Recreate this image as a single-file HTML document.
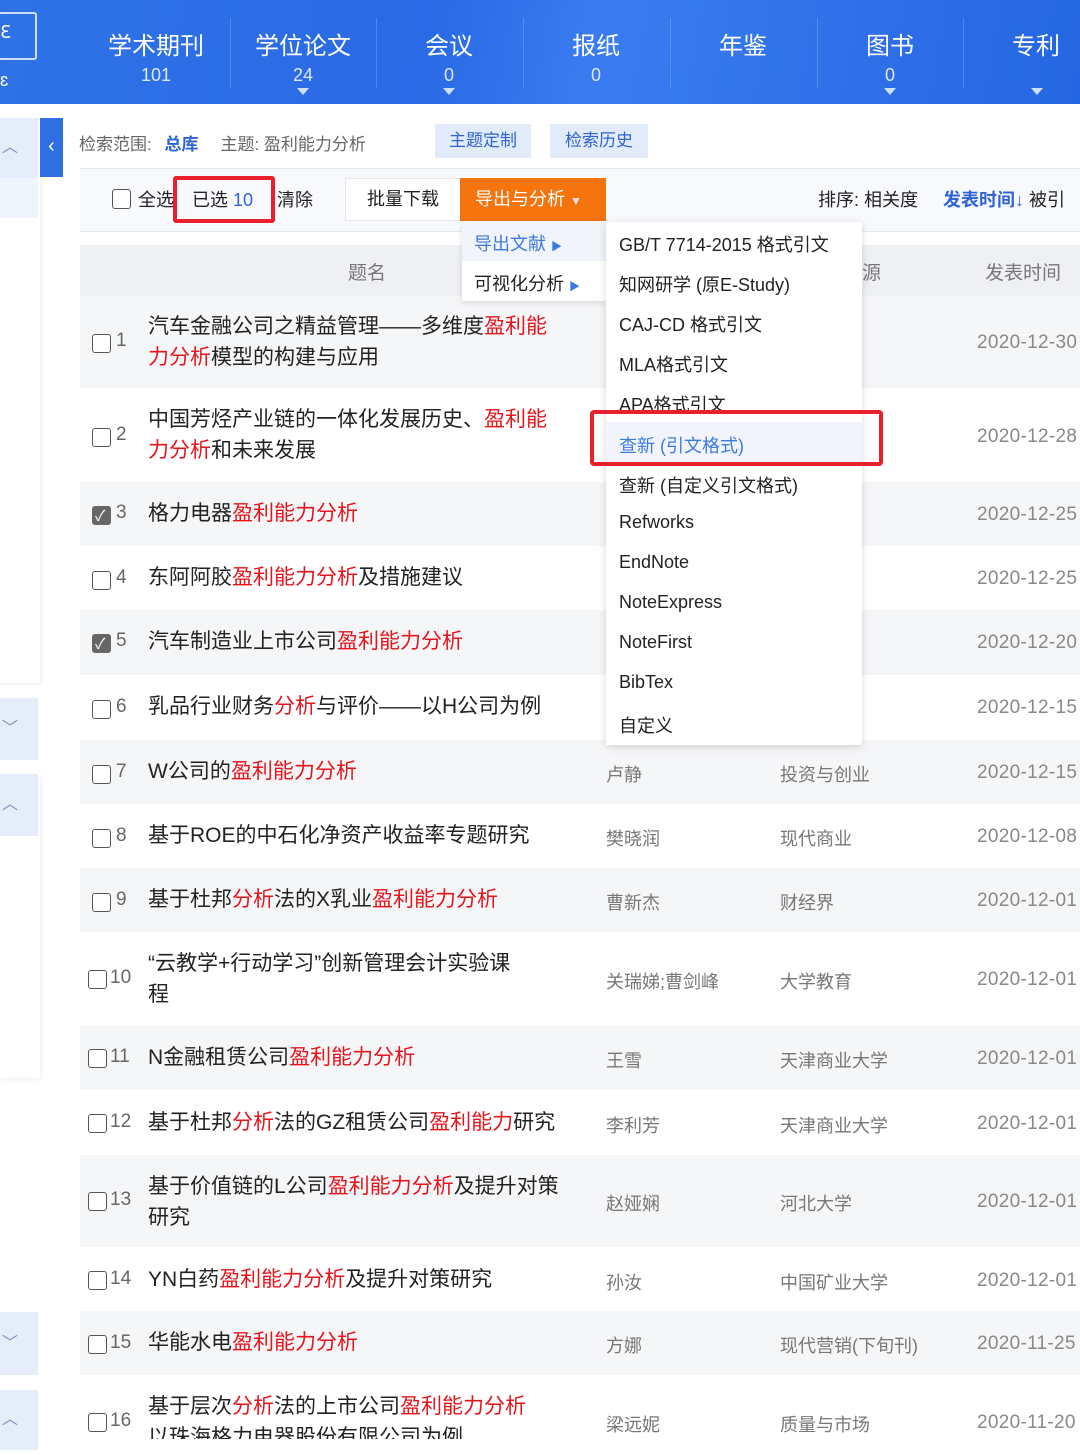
<!DOCTYPE html>
<html><head><meta charset="utf-8"><style>
*{margin:0;padding:0;box-sizing:border-box}
body{width:1080px;height:1440px;overflow:hidden;background:#fff;font-family:"Liberation Sans","Noto Sans CJK SC",sans-serif;position:relative;color:#222}
.a{position:absolute;white-space:nowrap}
.top{position:absolute;left:0;top:0;width:1080px;height:104px;background:linear-gradient(100deg,#2f72e6 0%,#2a6ae6 40%,#3a7cf0 55%,#2566e2 100%)}
.tab{position:absolute;top:0;width:146px;height:104px;text-align:center;color:#fff}
.tab b{display:block;font-weight:normal;font-size:24px;margin-top:26px;height:36px}
.tab i{display:block;font-style:normal;font-size:18px;color:#dfe9ff;margin-top:3px}
.tri{position:absolute;top:88px;width:0;height:0;border-left:6px solid transparent;border-right:6px solid transparent;border-top:7px solid #cfe0ff}
.div{position:absolute;top:18px;width:1px;height:70px;background:rgba(255,255,255,.18)}
.row{position:absolute;left:80px;width:1000px;font-size:21px}
.g{background:#f5f6f8}
.cb{position:absolute;left:12px;width:19px;height:19px;border:1.5px solid #555;border-radius:3px;background:#fff}
.cb.on{background:#666;border-color:#666}
.cb.on:after{content:"✓";color:#fff;font-size:15px;position:absolute;left:2px;top:-2px}
.num{position:absolute;left:36px;color:#666;font-size:19px}
.t{position:absolute;left:68px;line-height:31px;color:#222;white-space:nowrap}
.r{color:#e8141b}
.au{position:absolute;left:526px;color:#777;font-size:18px}
.so{position:absolute;left:700px;color:#777;font-size:18px}
.dt{position:absolute;left:897px;color:#888;font-size:19px;letter-spacing:.3px}
.mi{position:absolute;left:619px;font-size:18px;color:#222}
.sb{position:absolute;left:0;width:38px;background:#e6edfa;color:#7d8fb5;font-size:16px;text-align:left;padding-left:2px}
</style></head><body>
<div class="top"></div>
<div class="a" style="left:-2px;top:12px;width:39px;height:48px;border:2px solid #cfe0ff;border-radius:3px"></div>
<div class="a" style="left:0;top:22px;color:#fff;font-size:18px">ℇ</div>
<div class="a" style="left:0;top:70px;color:#fff;font-size:18px">ɛ</div>
<div class="tab" style="left:83px"><b>学术期刊</b><i>101</i></div>
<div class="tab" style="left:230px"><b>学位论文</b><i>24</i></div>
<div class="tab" style="left:376px"><b>会议</b><i>0</i></div>
<div class="tab" style="left:523px"><b>报纸</b><i>0</i></div>
<div class="tab" style="left:670px"><b>年鉴</b><i></i></div>
<div class="tab" style="left:817px"><b>图书</b><i>0</i></div>
<div class="tab" style="left:963px"><b>专利</b><i></i></div>
<div class="div" style="left:230px"></div><div class="div" style="left:376px"></div><div class="div" style="left:523px"></div><div class="div" style="left:670px"></div><div class="div" style="left:817px"></div><div class="div" style="left:963px"></div>
<div class="tri" style="left:297px"></div><div class="tri" style="left:443px"></div><div class="tri" style="left:884px"></div><div class="tri" style="left:1031px"></div>

<div class="a" style="left:0;top:118px;width:40px;height:565px;background:#fff;box-shadow:1px 1px 4px rgba(0,0,0,.08)"></div>
<div class="sb" style="top:118px;height:60px;line-height:60px">︿</div>
<div class="a" style="left:0;top:178px;width:38px;height:40px;background:#f0f4fb"></div>
<div class="sb" style="top:698px;height:62px;line-height:62px">﹀</div>
<div class="a" style="left:0;top:774px;width:40px;height:304px;background:#fff;box-shadow:1px 1px 4px rgba(0,0,0,.08)"></div>
<div class="sb" style="top:774px;height:62px;line-height:62px">︿</div>
<div class="sb" style="top:1312px;height:63px;line-height:63px">﹀</div>
<div class="sb" style="top:1390px;height:60px;line-height:60px">︿</div>
<div class="a" style="left:40px;top:118px;width:23px;height:59px;background:#2f6fe4;color:#fff;font-size:20px;text-align:center;line-height:56px">‹</div>

<div class="a" style="left:79px;top:130px;font-size:17px;color:#666">检索范围: <span style="color:#2f64d6;font-weight:bold;margin-left:8px">总库</span><span style="margin-left:22px">主题: 盈利能力分析</span></div>
<div class="a" style="left:435px;top:124px;width:96px;height:34px;background:#e2ebf9;color:#2f64d6;font-size:17px;text-align:center;line-height:34px">主题定制</div>
<div class="a" style="left:550px;top:124px;width:98px;height:34px;background:#e2ebf9;color:#2f64d6;font-size:17px;text-align:center;line-height:34px">检索历史</div>

<div class="a" style="left:80px;top:168px;width:1000px;height:64px;background:#f7f9fc;border-top:1px solid #e6eaf0;border-bottom:1px solid #e6eaf0"></div>
<div class="a" style="left:112px;top:189px;width:19px;height:20px;border:1.5px solid #555;border-radius:3px;background:#fff"></div>
<div class="a" style="left:138px;top:186px;font-size:18px;color:#222">全选</div>
<div class="a" style="left:173px;top:176px;width:102px;height:47px;border:4px solid #e8202b;border-radius:3px;background:#f7f9fc"></div>
<div class="a" style="left:192px;top:186px;font-size:18px;color:#222">已选 <span style="color:#2f64d6">10</span></div>
<div class="a" style="left:277px;top:186px;font-size:18px;color:#222">清除</div>
<div class="a" style="left:345px;top:178px;width:116px;height:43px;background:#fff;border:1px solid #e3e6eb;font-size:18px;text-align:center;line-height:41px">批量下载</div>
<div class="a" style="left:460px;top:178px;width:146px;height:43px;background:#f5740e;color:#fff;font-size:18px;line-height:43px;padding-left:15px">导出与分析 <span style="font-size:12px;color:#fde">▼</span></div>
<div class="a" style="left:818px;top:186px;font-size:18px;color:#222">排序: 相关度 <span style="color:#2f64d6;font-weight:bold;margin-left:20px">发表时间↓</span> 被引</div>

<div class="a" style="left:80px;top:245px;width:1000px;height:51px;background:#eef0f4"></div>
<div class="a" style="left:348px;top:258px;font-size:19px;color:#777">题名</div>
<div class="a" style="left:862px;top:258px;font-size:19px;color:#777">源</div>
<div class="a" style="left:985px;top:258px;font-size:19px;color:#777">发表时间</div>

<div class="row g" style="top:296px;height:92px"><div class="cb" style="top:38px"></div><div class="num" style="top:34px">1</div><div class="t" style="top:15px">汽车金融公司之精益管理——多维度<span class="r">盈利能</span><br><span class="r">力分析</span>模型的构建与应用</div><div class="dt" style="top:36px">2020-12-30</div></div>
<div class="row" style="top:388px;height:94px"><div class="cb" style="top:40px"></div><div class="num" style="top:36px">2</div><div class="t" style="top:16px">中国芳烃产业链的一体化发展历史、<span class="r">盈利能</span><br><span class="r">力分析</span>和未来发展</div><div class="so" style="top:36px">及应用</div><div class="dt" style="top:38px">2020-12-28</div></div>
<div class="row g" style="top:482px;height:64px"><div class="cb on" style="top:24px"></div><div class="num" style="top:20px">3</div><div class="t" style="top:16px">格力电器<span class="r">盈利能力分析</span></div><div class="so" style="top:20px">下旬刊)</div><div class="dt" style="top:22px">2020-12-25</div></div>
<div class="row" style="top:546px;height:64px"><div class="cb" style="top:25px"></div><div class="num" style="top:21px">4</div><div class="t" style="top:16px">东阿阿胶<span class="r">盈利能力分析</span>及措施建议</div><div class="so" style="top:20px">与管理</div><div class="dt" style="top:22px">2020-12-25</div></div>
<div class="row g" style="top:610px;height:65px"><div class="cb on" style="top:24px"></div><div class="num" style="top:20px">5</div><div class="t" style="top:16px">汽车制造业上市公司<span class="r">盈利能力分析</span></div><div class="so" style="top:20px">研究</div><div class="dt" style="top:22px">2020-12-20</div></div>
<div class="row" style="top:675px;height:65px"><div class="cb" style="top:25px"></div><div class="num" style="top:21px">6</div><div class="t" style="top:16px">乳品行业财务<span class="r">分析</span>与评价——以H公司为例</div><div class="dt" style="top:22px">2020-12-15</div></div>
<div class="row g" style="top:740px;height:64px"><div class="cb" style="top:25px"></div><div class="num" style="top:21px">7</div><div class="t" style="top:16px">W公司的<span class="r">盈利能力分析</span></div><div class="au" style="top:21px">卢静</div><div class="so" style="top:21px">投资与创业</div><div class="dt" style="top:22px">2020-12-15</div></div>
<div class="row" style="top:804px;height:64px"><div class="cb" style="top:25px"></div><div class="num" style="top:21px">8</div><div class="t" style="top:16px">基于ROE的中石化净资产收益率专题研究</div><div class="au" style="top:21px">樊晓润</div><div class="so" style="top:21px">现代商业</div><div class="dt" style="top:22px">2020-12-08</div></div>
<div class="row g" style="top:868px;height:64px"><div class="cb" style="top:25px"></div><div class="num" style="top:21px">9</div><div class="t" style="top:16px">基于杜邦<span class="r">分析</span>法的X乳业<span class="r">盈利能力分析</span></div><div class="au" style="top:21px">曹新杰</div><div class="so" style="top:21px">财经界</div><div class="dt" style="top:22px">2020-12-01</div></div>
<div class="row" style="top:932px;height:94px"><div class="cb" style="left:8px;top:38px"></div><div class="num" style="left:30px;top:35px">10</div><div class="t" style="top:16px">“云教学+行动学习”创新管理会计实验课<br>程</div><div class="au" style="top:36px">关瑞娣;曹剑峰</div><div class="so" style="top:36px">大学教育</div><div class="dt" style="top:37px">2020-12-01</div></div>
<div class="row g" style="top:1026px;height:64px"><div class="cb" style="left:8px;top:23px"></div><div class="num" style="left:30px;top:20px">11</div><div class="t" style="top:16px">N金融租赁公司<span class="r">盈利能力分析</span></div><div class="au" style="top:21px">王雪</div><div class="so" style="top:21px">天津商业大学</div><div class="dt" style="top:22px">2020-12-01</div></div>
<div class="row" style="top:1090px;height:65px"><div class="cb" style="left:8px;top:24px"></div><div class="num" style="left:30px;top:21px">12</div><div class="t" style="top:17px">基于杜邦<span class="r">分析</span>法的GZ租赁公司<span class="r">盈利能力</span>研究</div><div class="au" style="top:22px">李利芳</div><div class="so" style="top:22px">天津商业大学</div><div class="dt" style="top:23px">2020-12-01</div></div>
<div class="row g" style="top:1155px;height:92px"><div class="cb" style="left:8px;top:37px"></div><div class="num" style="left:30px;top:34px">13</div><div class="t" style="top:16px">基于价值链的L公司<span class="r">盈利能力分析</span>及提升对策<br>研究</div><div class="au" style="top:35px">赵娅娴</div><div class="so" style="top:35px">河北大学</div><div class="dt" style="top:36px">2020-12-01</div></div>
<div class="row" style="top:1247px;height:64px"><div class="cb" style="left:8px;top:24px"></div><div class="num" style="left:30px;top:21px">14</div><div class="t" style="top:17px">YN白药<span class="r">盈利能力分析</span>及提升对策研究</div><div class="au" style="top:22px">孙汝</div><div class="so" style="top:22px">中国矿业大学</div><div class="dt" style="top:23px">2020-12-01</div></div>
<div class="row g" style="top:1311px;height:64px"><div class="cb" style="left:8px;top:24px"></div><div class="num" style="left:30px;top:21px">15</div><div class="t" style="top:16px">华能水电<span class="r">盈利能力分析</span></div><div class="au" style="top:21px">方娜</div><div class="so" style="top:21px">现代营销(下旬刊)</div><div class="dt" style="top:22px">2020-11-25</div></div>
<div class="row" style="top:1375px;height:80px"><div class="cb" style="left:8px;top:38px"></div><div class="num" style="left:30px;top:35px">16</div><div class="t" style="top:16px;height:48px;overflow:hidden">基于层次<span class="r">分析</span>法的上市公司<span class="r">盈利能力分析</span><br>以珠海格力电器股份有限公司为例</div><div class="au" style="top:36px">梁远妮</div><div class="so" style="top:36px">质量与市场</div><div class="dt" style="top:37px">2020-11-20</div></div>

<div class="a" style="left:462px;top:222px;width:144px;height:79px;background:#fff;box-shadow:0 2px 6px rgba(0,0,0,.12)"></div>
<div class="a" style="left:462px;top:222px;width:144px;height:39px;background:#f1f4f9"></div>
<div class="a" style="left:474px;top:230px;font-size:18px;color:#3b7be0">导出文献 <span style="font-size:11px">▶</span></div>
<div class="a" style="left:474px;top:270px;font-size:18px;color:#222">可视化分析 <span style="font-size:11px;color:#3b7be0">▶</span></div>
<div class="a" style="left:606px;top:222px;width:256px;height:523px;background:#fff;box-shadow:0 2px 8px rgba(0,0,0,.15)"></div>
<div class="a" style="left:606px;top:422px;width:256px;height:42px;background:#f1f4fa"></div>
<div class="mi" style="top:231px">GB/T 7714-2015 格式引文</div>
<div class="mi" style="top:271px">知网研学 (原E-Study)</div>
<div class="mi" style="top:311px">CAJ-CD 格式引文</div>
<div class="mi" style="top:351px">MLA格式引文</div>
<div class="mi" style="top:391px">APA格式引文</div>
<div class="mi" style="top:432px;color:#3b7be0">查新 (引文格式)</div>
<div class="mi" style="top:472px">查新 (自定义引文格式)</div>
<div class="mi" style="top:512px">Refworks</div>
<div class="mi" style="top:552px">EndNote</div>
<div class="mi" style="top:592px">NoteExpress</div>
<div class="mi" style="top:632px">NoteFirst</div>
<div class="mi" style="top:672px">BibTex</div>
<div class="mi" style="top:712px">自定义</div>
<div class="a" style="left:590px;top:410px;width:293px;height:56px;border:4px solid #e8202b;border-radius:4px"></div>
</body></html>
